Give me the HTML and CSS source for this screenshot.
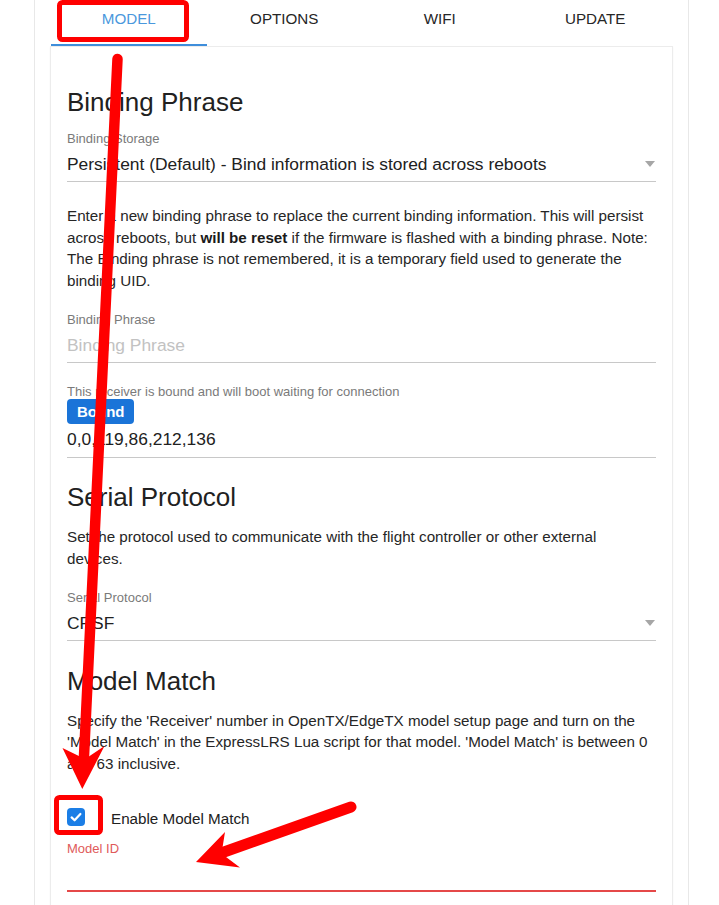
FILE: index.html
```html
<!DOCTYPE html>
<html lang="en">
<head>
<meta charset="utf-8">
<title>ExpressLRS</title>
<link rel="stylesheet" href="styles.css">
</head>
<body>
<div class="outer">
  <nav class="tabs">
    <div class="tab active">MODEL</div>
    <div class="tab">OPTIONS</div>
    <div class="tab">WIFI</div>
    <div class="tab">UPDATE</div>
  </nav>
  <main class="card">
    <h2 class="heading">Binding Phrase</h2>
    <div class="field first">
      <div class="label">Binding Storage</div>
      <div class="control select">
        <span>Persistent (Default) - Bind information is stored across reboots</span>
        <span class="caret"></span>
      </div>
    </div>
    <p class="para after-field">Enter a new binding phrase to replace the current binding information. This will persist across reboots, but <b>will be reset</b> if the firmware is flashed with a binding phrase. Note: The Binding phrase is not remembered, it is a temporary field used to generate the binding UID.</p>
    <div class="field">
      <div class="label">Binding Phrase</div>
      <div class="control placeholder">Binding Phrase</div>
    </div>
    <div class="field">
      <div class="label">This receiver is bound and will boot waiting for connection</div>
      <div class="badge-row"><span class="badge">Bound</span></div>
      <div class="control uid">0,0,119,86,212,136</div>
    </div>

    <h2 class="heading">Serial Protocol</h2>
    <p class="para">Set the protocol used to communicate with the flight controller or other external devices.</p>
    <div class="field">
      <div class="label">Serial Protocol</div>
      <div class="control select">
        <span>CRSF</span>
        <span class="caret"></span>
      </div>
    </div>

    <h2 class="heading">Model Match</h2>
    <p class="para">Specify the 'Receiver' number in OpenTX/EdgeTX model setup page and turn on the 'Model Match' in the ExpressLRS Lua script for that model. 'Model Match' is between 0 and 63 inclusive.</p>
    <div class="check-row">
      <span class="checkbox">
        <svg width="18" height="18" viewBox="0 0 18 18"><polyline points="4.6,9.4 7.6,12.3 13.4,6" fill="none" stroke="#fff" stroke-width="2.2" stroke-linecap="round" stroke-linejoin="round"/></svg>
      </span>
      <span class="check-text">Enable Model Match</span>
    </div>
    <div class="field error tight">
      <div class="label">Model ID</div>
      <div class="control">&nbsp;</div>
    </div>
    <div class="spacer"></div>
  </main>
</div>

<svg class="annotations" width="719" height="905" viewBox="0 0 719 905">
  <rect x="59.5" y="2.5" width="127" height="37" rx="3" fill="none" stroke="#ff0000" stroke-width="5"/>
  <rect x="56.5" y="797.5" width="44" height="35" rx="3" fill="none" stroke="#ff0000" stroke-width="5"/>
  <line x1="117.5" y1="59" x2="84" y2="756" stroke="#ff0000" stroke-width="10.5" stroke-linecap="round"/>
  <polygon points="82.3,789 62.5,748 78.9,756 88.9,756.5 104.5,746" fill="#ff0000"/>
  <line x1="351" y1="807" x2="224" y2="852" stroke="#ff0000" stroke-width="11" stroke-linecap="round"/>
  <polygon points="196,862 225,832 222.6,847 226,857 240,867.5" fill="#ff0000"/>
</svg>
</body>
</html>
```

FILE: styles.css
```css
* {
  box-sizing: border-box;
}

html, body {
  margin: 0;
  padding: 0;
  background: #ffffff;
}

body {
  font-family: "Liberation Sans", Arial, sans-serif;
  color: #212121;
  overflow: hidden;
  height: 905px;
}

.outer {
  margin-left: 34px;
  width: 655px;
  min-height: 905px;
  border-left: 1px solid #e8e8e8;
  border-right: 1px solid #e8e8e8;
  padding: 0 15px 0 15px;
}

.tabs {
  display: grid;
  grid-template-columns: repeat(4, 1fr);
  padding-left: 1px;
}

.tab {
  text-align: center;
  font-size: 15.2px;
  line-height: 20px;
  padding: 9px 0 15px;
  color: #262626;
  border-bottom: 2px solid transparent;
}

.tab.active {
  color: #4a98dd;
  border-bottom-color: #3f8edb;
}

.card {
  border: 1px solid #ececec;
  border-bottom: none;
  box-shadow: 0 1px 2px rgba(0, 0, 0, 0.04);
  padding: 16px 16px 0;
}

.heading {
  margin: 24.5px 0 0;
  font-size: 26px;
  line-height: 30px;
  font-weight: normal;
  color: #212121;
}

.heading:first-child {
  margin-top: 24px;
}

.field {
  margin-top: 21px;
}

.field.first {
  margin-top: 14px;
}

.field.tight {
  margin-top: 11px;
}

.label {
  font-size: 13px;
  line-height: 15px;
  color: #7a7a7a;
  white-space: nowrap;
}

.control {
  margin-top: 6px;
  font-size: 17.4px;
  line-height: 24px;
  padding-bottom: 5px;
  border-bottom: 1px solid #c8c8c8;
  color: #212121;
}

.control.uid {
  margin-top: 2.5px;
  padding-bottom: 6px;
}

.select {
  display: flex;
  justify-content: space-between;
  align-items: center;
}

.caret {
  width: 0;
  height: 0;
  border-left: 5.5px solid transparent;
  border-right: 5.5px solid transparent;
  border-top: 6px solid #a6a6a6;
  margin-right: 1px;
}

.placeholder {
  color: #c2c2c2;
}

.badge-row {
  display: flex;
}

.badge {
  display: inline-block;
  background: #1a74d8;
  color: #ffffff;
  font-weight: bold;
  font-size: 15px;
  line-height: 25px;
  height: 25px;
  padding: 0 10px;
  border-radius: 4px;
}

.para {
  margin: 14px 0 0;
  font-size: 15.2px;
  line-height: 21.5px;
  color: #262626;
}

.para.after-field {
  margin-top: 23px;
}

.para b {
  font-weight: bold;
  color: #1a1a1a;
}

.check-row {
  margin-top: 34px;
  display: flex;
  align-items: flex-start;
  height: 22px;
}

.checkbox {
  width: 18px;
  height: 18px;
  border-radius: 4px;
  background: #1b7ee6;
  display: block;
}

.checkbox svg {
  display: block;
}

.check-text {
  margin-left: 26px;
  font-size: 15.2px;
  line-height: 22px;
  color: #212121;
}

.field.error .label {
  color: #e05a5a;
}

.field.error .control {
  padding-bottom: 4px;
  border-bottom: 2px solid #e54848;
}

.spacer {
  height: 60px;
}

.annotations {
  position: absolute;
  left: 0;
  top: 0;
  pointer-events: none;
}
```
